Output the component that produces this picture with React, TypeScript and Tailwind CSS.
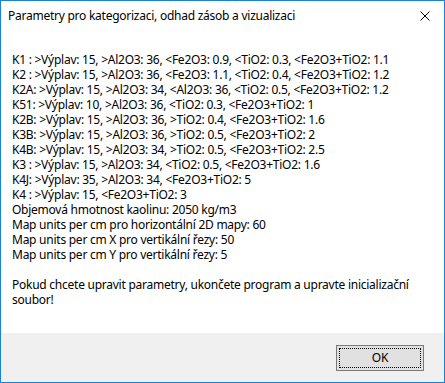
import React from 'react';

const lines: string[] = [
  'K1 : >Výplav: 15, >Al2O3: 36, <Fe2O3: 0.9, <TiO2: 0.3, <Fe2O3+TiO2: 1.1',
  'K2 : >Výplav: 15, >Al2O3: 36, <Fe2O3: 1.1, <TiO2: 0.4, <Fe2O3+TiO2: 1.2',
  'K2A: >Výplav: 15, >Al2O3: 34, <Al2O3: 36, <TiO2: 0.5, <Fe2O3+TiO2: 1.2',
  'K51: >Výplav: 10, >Al2O3: 36, <TiO2: 0.3, <Fe2O3+TiO2: 1',
  'K2B: >Výplav: 15, >Al2O3: 36, >TiO2: 0.4, <Fe2O3+TiO2: 1.6',
  'K3B: >Výplav: 15, >Al2O3: 36, >TiO2: 0.5, <Fe2O3+TiO2: 2',
  'K4B: >Výplav: 15, >Al2O3: 34, >TiO2: 0.5, <Fe2O3+TiO2: 2.5',
  'K3 : >Výplav: 15, >Al2O3: 34, <TiO2: 0.5, <Fe2O3+TiO2: 1.6',
  'K4J: >Výplav: 35, >Al2O3: 34, <Fe2O3+TiO2: 5',
  'K4 : >Výplav: 15, <Fe2O3+TiO2: 3',
  'Objemová hmotnost kaolinu: 2050 kg/m3',
  'Map units per cm pro horizontální 2D mapy: 60',
  'Map units per cm X pro vertikální řezy: 50',
  'Map units per cm Y pro vertikální řezy: 5',
];

const App: React.FC = () => {
  return (
    <div className="w-[445px] h-[383px] flex flex-col border border-[#1883d7] bg-white text-black font-['Noto_Sans',sans-serif] text-[12px] tracking-[-0.25px]">
      {/* Title bar */}
      <div className="h-[29px] flex items-center justify-between pl-[7px] pr-[14px]">
        <span className="leading-[15px]">Parametry pro kategorizaci, odhad zásob a vizualizaci</span>
        <svg width="10" height="10" viewBox="0 0 10 10" className="mt-[1px]">
          <path d="M0.5 0.5 L9.5 9.5 M9.5 0.5 L0.5 9.5" stroke="#000" strokeWidth="1" />
        </svg>
      </div>

      {/* Message */}
      <div className="flex-1 pl-[11px] pt-[22px] leading-[15px]">
        {lines.map((l) => (
          <div key={l} className="whitespace-pre">{l}</div>
        ))}
        <div className="h-[15px]" />
        <div>Pokud chcete upravit parametry, ukončete program a upravte inicializační</div>
        <div>soubor!</div>
      </div>

      {/* Buttons */}
      <div className="h-[49px] bg-[#f0f0f0] flex items-start justify-end pt-[12px] pr-[20px]">
        <button
          type="button"
          className="w-[88px] h-[26px] border border-[#7a7a7a] bg-[#e1e1e1] p-[2px] flex"
        >
          <span className="flex-1 border border-dotted border-black flex items-center justify-center leading-none">
            OK
          </span>
        </button>
      </div>
    </div>
  );
};

export default App;
